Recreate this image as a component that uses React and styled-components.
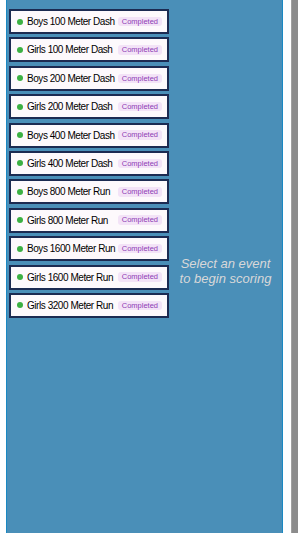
import React from "react";
import styled, { createGlobalStyle } from "styled-components";

const Global = createGlobalStyle`
  html, body { margin: 0; padding: 0; background: #fff; }
  body { font-family: "Liberation Sans", Arial, sans-serif; }
`;

const Page = styled.div`
  display: flex;
  height: 533px;
  width: 300px;
  overflow: hidden;
`;

const Gutter = styled.div`
  width: 6px;
  flex: none;
  background: #fff;
`;

const Panel = styled.div`
  width: 277px;
  flex: none;
  background: #4a8fb8;
  border-left: 1px solid #1a88c2;
  border-right: 1px solid #1a88c2;
  display: flex;
  padding: 9px 0 0 2px;
  box-sizing: border-box;
`;

const List = styled.div`
  display: flex;
  flex-direction: column;
  gap: 3.4px;
  width: 160px;
  flex: none;
`;

const Card = styled.div`
  display: flex;
  align-items: center;
  height: 25px;
  box-sizing: border-box;
  border: 2px solid #1c2b52;
  background: #fdf9fc;
  padding: 0 5px 0 6px;
`;

const Dot = styled.span`
  width: 6px;
  height: 6px;
  border-radius: 50%;
  background: #3cb043;
  flex: none;
  margin-right: 4px;
`;

const Name = styled.span`
  font-size: 10px;
  letter-spacing: -0.45px;
  color: #000;
  flex: 1;
  white-space: nowrap;
`;

const Badge = styled.span`
  font-size: 7.5px;
  color: #8e3bb5;
  background: #f3e3f7;
  border-radius: 3px;
  padding: 1px 4px;
  line-height: 7.5px;
`;

const Empty = styled.div`
  flex: 1;
  display: flex;
  align-items: center;
  justify-content: center;
  text-align: center;
  font-style: italic;
  color: #d8d8d8;
  font-size: 13px;
  line-height: 15px;
`;

const Spacer = styled.div`
  width: 8px;
  flex: none;
  background: #fff;
`;

const Scroll = styled.div`
  width: 7px;
  flex: none;
  background: #8c8c8c;
  border-left: 1px solid #a0a0a0;
  box-sizing: border-box;
`;

const events = [
  "Boys 100 Meter Dash",
  "Girls 100 Meter Dash",
  "Boys 200 Meter Dash",
  "Girls 200 Meter Dash",
  "Boys 400 Meter Dash",
  "Girls 400 Meter Dash",
  "Boys 800 Meter Run",
  "Girls 800 Meter Run",
  "Boys 1600 Meter Run",
  "Girls 1600 Meter Run",
  "Girls 3200 Meter Run",
];

export default function App() {
  return (
    <>
      <Global />
      <Page>
        <Gutter />
        <Panel>
          <List>
            {events.map((e) => (
              <Card key={e}>
                <Dot />
                <Name>{e}</Name>
                <Badge>Completed</Badge>
              </Card>
            ))}
          </List>
          <Empty>
            Select an event
            <br />
            to begin scoring
          </Empty>
        </Panel>
        <Spacer />
        <Scroll />
      </Page>
    </>
  );
}
